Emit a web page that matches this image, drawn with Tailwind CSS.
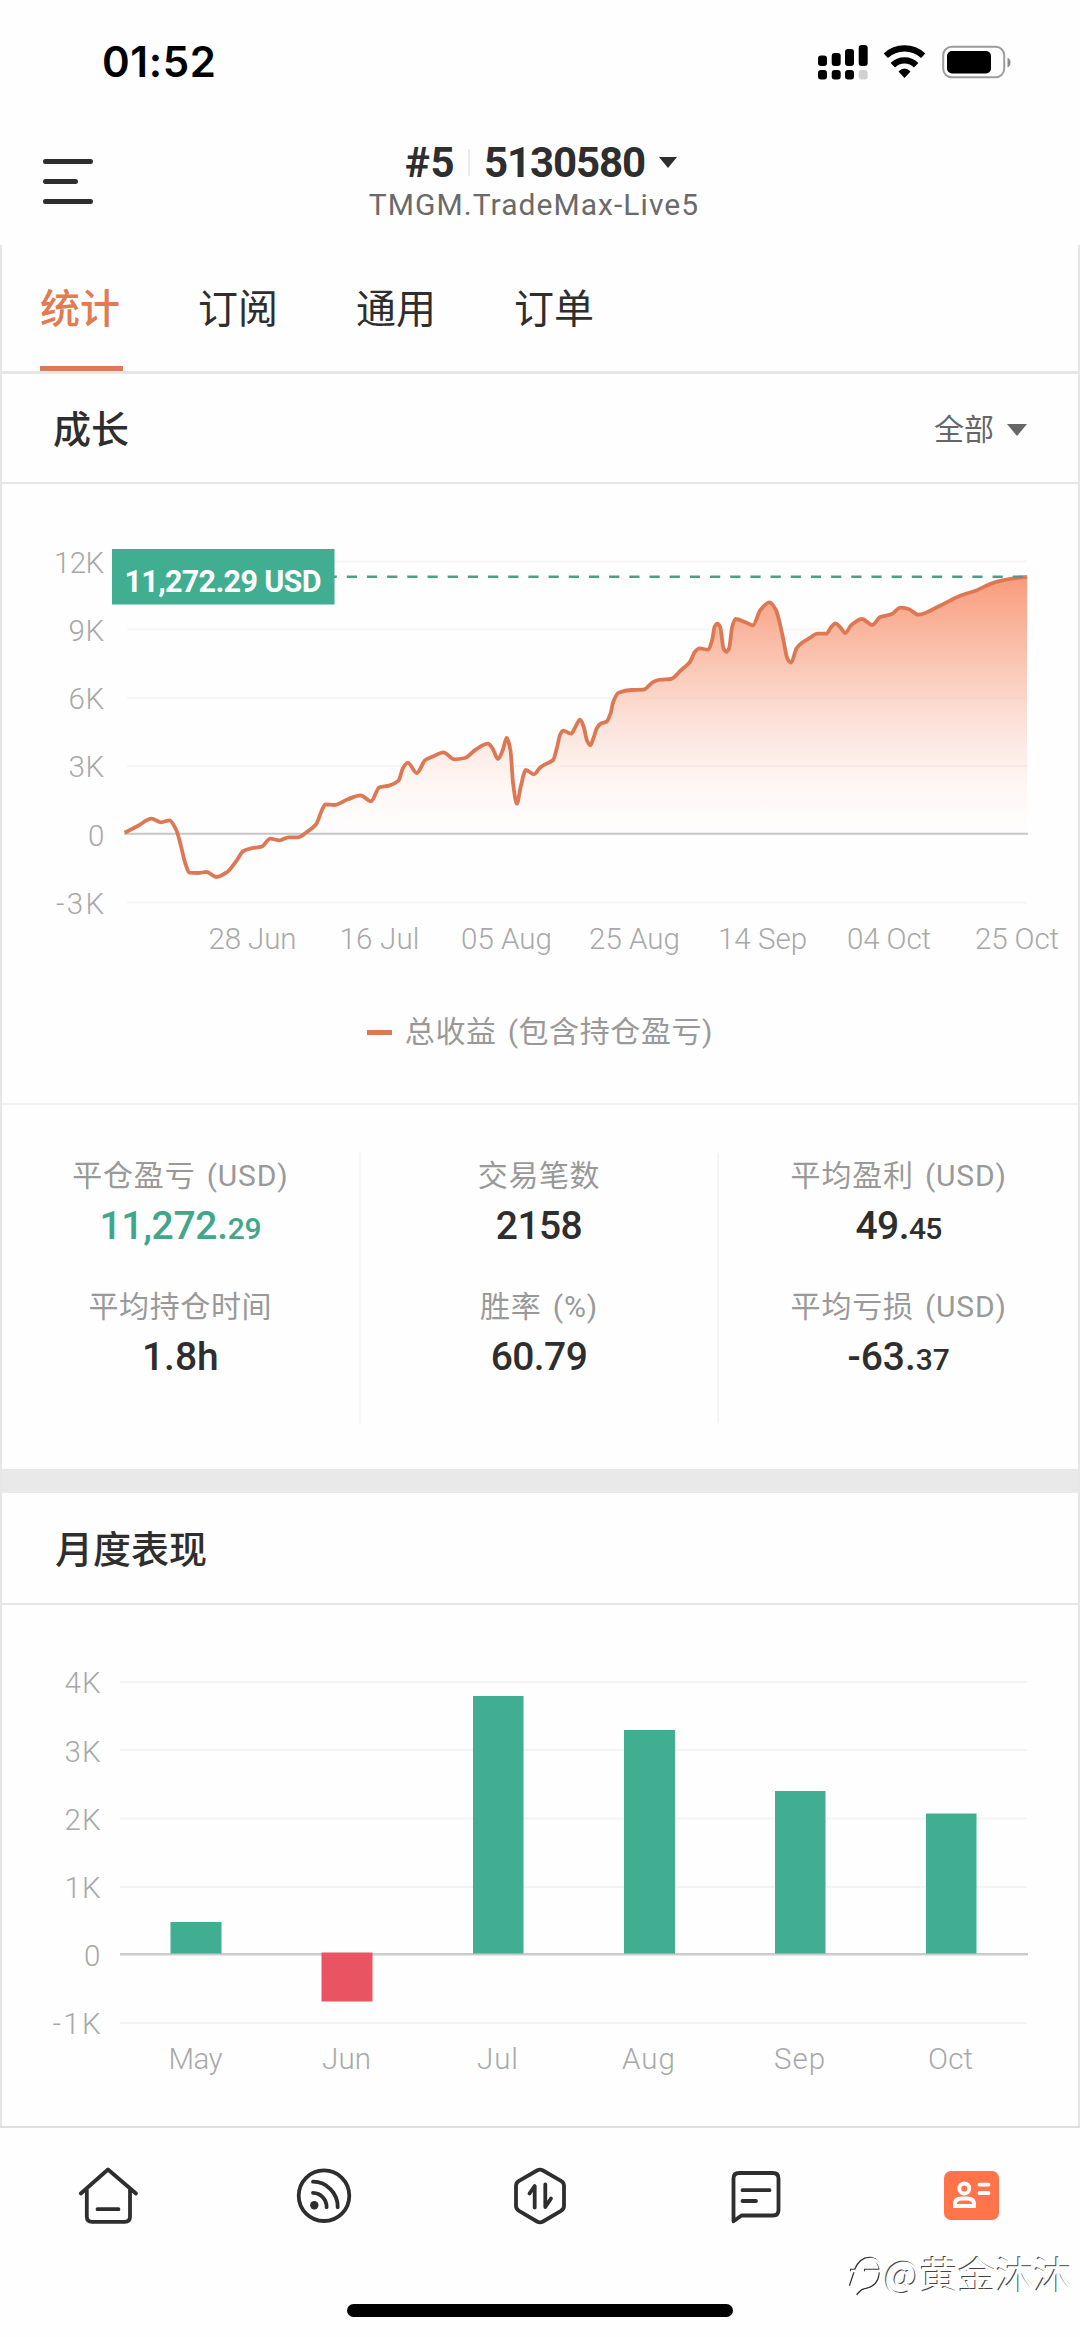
<!DOCTYPE html>
<html lang="zh-CN">
<head>
<meta charset="utf-8">
<title>统计</title>
<script src="https://cdn.jsdelivr.net/npm/@tailwindcss/browser@4"></script>
</head>
<body class="w-[1080px] h-[2337px] overflow-hidden bg-[#fefefe] text-[#2e2e2e] font-['Roboto','Noto_Sans_CJK_SC',sans-serif]">
<div class="relative flex flex-col h-[2337px]">

  <!-- status bar -->
  <header class="flex flex-col h-[245px] shrink-0">
    <div class="flex items-center justify-between h-[123px] pl-[102px] pr-[68px]">
      <span class="font-['Inter',sans-serif] font-semibold text-[42px] leading-none text-black tracking-[0.6px]">01:52</span>
      <svg class="w-[196px] h-[40px]" viewBox="816 41 196 40">
        <rect x="818" y="54.5" width="9" height="10.5" rx="3"/><rect x="831.7" y="52" width="9" height="13" rx="3"/><rect x="845" y="48" width="9" height="17" rx="3"/><rect x="858.7" y="44" width="9" height="21" rx="3"/>
        <rect x="818" y="69" width="9" height="9.5" rx="3"/><rect x="831.7" y="69" width="9" height="9.5" rx="3"/><rect x="845" y="69" width="9" height="9.5" rx="3"/><rect x="858.7" y="69" width="9" height="9.5" rx="3" fill="#d0d0d0"/>
        <path d="M885.8 54.7a27.5 27.5 0 0 1 37.4 0M892.8 64.3a16.5 16.5 0 0 1 23.4 0" fill="none" stroke="#000" stroke-width="6.2"/>
        <path d="M898.5 70.5q6-6 12 0l-6 6.5z"/>
        <rect x="943.2" y="45.7" width="61" height="30.5" rx="8.5" fill="none" stroke="#9c9c9c" stroke-width="2"/>
        <rect x="947" y="50" width="44" height="22.5" rx="5"/>
        <path d="M1007.5 56.5q3 1.5 3 5t-3 5z" fill="#8c8c8c"/>
      </svg>
    </div>
    <div class="flex h-[122px]">
      <svg class="ml-[43px] mt-[35px] w-[50px] h-[46px]" viewBox="0 0 50 46" stroke="#2e2e2e" stroke-width="5" stroke-linecap="round"><path d="M2.5 3.5h45M2.5 23.5h30M2.5 43.5h45"/></svg>
      <div class="flex flex-col items-center ml-[242px] w-[398px] mt-[19px]">
        <div class="flex items-center h-[40px] pl-[14px]">
          <span class="font-bold text-[42px] leading-[40px] pt-[2px] tracking-[0.5px]">#5</span>
          <span class="w-[2px] h-[27px] ml-[13px] mr-[14px] bg-[#ececec]"></span>
          <span class="font-bold text-[42px] leading-[40px] pt-[2px] tracking-[-1.1px]">5130580</span>
          <svg class="ml-[14px] w-[18px] h-[11px]" viewBox="0 0 18 11"><path d="M0 0h18l-9 11z" fill="#2e2e2e"/></svg>
        </div>
        <span class="text-[30px] leading-[34px] mt-[6px] text-[#6a6a6a] tracking-[1.05px]">TMGM.TradeMax-Live5</span>
      </div>
    </div>
  </header>

  <main class="flex flex-col h-[1881px] shrink-0 border-x-2 border-[#e6e6e6]">
    <nav class="flex h-[129px] shrink-0 gap-[75px] pl-[38px] border-b-3 border-[#e6e6e6] text-[40px] leading-[130px]">
      <a class="w-[83px] h-[126px] font-medium text-[#e27a52] border-b-5 border-[#db7a59]">统计</a>
      <a class="w-[83px]">订阅</a><a class="w-[83px]">通用</a><a class="w-[83px]">订单</a>
    </nav>
    <div class="flex items-center justify-between h-[110px] shrink-0 pl-[51px] pr-[51px] pt-[3px] border-b-2 border-[#e6e6e6]">
      <h2 class="font-medium text-[38px] leading-none">成长</h2>
      <div class="flex items-center gap-[13px] text-[30px] leading-none text-[#666]">全部<svg class="w-[20px] h-[12px]" viewBox="0 0 20 12"><path d="M0 0h20l-10 12z" fill="#666"/></svg></div>
    </div>

    <!-- growth curve -->
    <svg class="w-[1076px] h-[521px] shrink-0" viewBox="2 484 1076 521">
      <defs><linearGradient id="area" gradientUnits="userSpaceOnUse" x1="0" y1="576" x2="0" y2="834">
        <stop offset="0" stop-color="#fa9b7c"/><stop offset=".25" stop-color="#f9bba5"/><stop offset=".55" stop-color="#fce0d7"/><stop offset=".8" stop-color="#fef6f3"/><stop offset="1" stop-color="#fefefe"/>
      </linearGradient></defs>
      <path d="M127 561.5h900M127 629.5h900M127 698h900M127 766h900M127 902.5h900" stroke="#f5f5f5" stroke-width="2"/>
      <path id="fill" fill="url(#area)"/>
      <path d="M640 698h387M560 766h467" stroke="#e8b9a5" stroke-opacity=".12" stroke-width="2"/>
      <path d="M124 833.7h904" stroke="#c6c6c6" stroke-width="2"/>
      <path id="curve" fill="none" stroke="#dd7855" stroke-width="3.8" stroke-linejoin="round"/>
      <path d="M326.6 576.7H1027" stroke="#4a9f86" stroke-width="2.6" stroke-dasharray="10.2 9.98"/>
      <rect x="112" y="549" width="222.5" height="55.5" fill="#42ae91"/>
      <text x="124.5" y="592" font-size="30.5" font-weight="700" fill="#fff" textLength="197">11,272.29 USD</text>
      <g font-size="29.5" font-weight="300" fill="#a8a8a8">
        <text x="54" y="573" textLength="50">12K</text><text x="68.5" y="641" textLength="35.5">9K</text><text x="68.5" y="709" textLength="35.5">6K</text><text x="68.5" y="777" textLength="35.5">3K</text><text x="88" y="845.5">0</text><text x="56" y="914" textLength="48">-3K</text>
      </g>
      <g font-size="29.5" font-weight="300" fill="#a8a8a8">
        <text x="208.5" y="948.5" textLength="88">28 Jun</text><text x="339.5" y="948.5" textLength="80">16 Jul</text><text x="461" y="948.5" textLength="91">05 Aug</text><text x="589" y="948.5" textLength="91">25 Aug</text><text x="718" y="948.5" textLength="89">14 Sep</text><text x="847" y="948.5" textLength="84">04 Oct</text><text x="975" y="948.5" textLength="84">25 Oct</text>
      </g>
    </svg>
    <div class="flex items-center justify-center gap-[13px] h-[54px] shrink-0 text-[30px] leading-[54px] text-[#999] tracking-[0.6px]">
      <span class="w-[25px] h-[5px] bg-[#dd7855]"></span><span class="[word-spacing:3px]">总收益 (包含持仓盈亏)</span>
    </div>
    <div class="h-[46px] shrink-0 border-b-2 border-[#f2f2f2]"></div>

    <!-- key figures -->
    <section class="grid grid-cols-3 h-[270px] mt-[48px] mb-[46px] shrink-0 text-center divide-x-2 divide-[#f6f6f6]">
      <div class="flex flex-col">
        <p class="h-[46px] leading-[46px] text-[30px] tracking-[0.8px] [word-spacing:3px] text-[#999]">平仓盈亏 (USD)</p>
        <p class="h-[85px] leading-[54px] text-[39px] tracking-[-0.3px] font-medium text-[#42a68b]">11,272.<span class="text-[30px]">29</span></p>
        <p class="h-[46px] leading-[46px] text-[30px] tracking-[0.6px] text-[#999]">平均持仓时间</p>
        <p class="leading-[54px] text-[39px] font-medium">1.8h</p>
      </div>
      <div class="flex flex-col">
        <p class="h-[46px] leading-[46px] text-[30px] tracking-[0.6px] text-[#999]">交易笔数</p>
        <p class="h-[85px] leading-[54px] text-[39px] tracking-[-0.6px] font-medium">2158</p>
        <p class="h-[46px] leading-[46px] text-[30px] tracking-[0.8px] [word-spacing:3px] text-[#999]">胜率 (%)</p>
        <p class="leading-[54px] text-[39px] tracking-[-0.6px] font-medium">60.79</p>
      </div>
      <div class="flex flex-col">
        <p class="h-[46px] leading-[46px] text-[30px] tracking-[0.8px] [word-spacing:3px] text-[#999]">平均盈利 (USD)</p>
        <p class="h-[85px] leading-[54px] text-[39px] tracking-[-0.6px] font-medium">49.<span class="text-[30px]">45</span></p>
        <p class="h-[46px] leading-[46px] text-[30px] tracking-[0.8px] [word-spacing:3px] text-[#999]">平均亏损 (USD)</p>
        <p class="leading-[54px] text-[39px] font-medium">-63.<span class="text-[30px]">37</span></p>
      </div>
    </section>
    <div class="h-[24px] shrink-0 bg-[#e9e9e9]"></div>
    <div class="flex items-center h-[112px] shrink-0 pl-[53px] pt-[3px] border-b-2 border-[#e6e6e6]"><h2 class="font-medium text-[38px] leading-none">月度表现</h2></div>

    <!-- monthly results -->
    <svg class="w-[1076px] h-[521px] shrink-0" viewBox="2 1605 1076 521">
      <path d="M120 1682h907M120 1750h907M120 1818.5h907M120 1887h907M120 2023h907" stroke="#f3f3f3" stroke-width="2"/>
      <path d="M120 1954.3h908" stroke="#cbcbcb" stroke-width="2.6"/>
      <g fill="#42ae91"><rect x="170.5" y="1922" width="51" height="31.5"/><rect x="473" y="1696" width="50.5" height="257.5"/><rect x="624" y="1730" width="51" height="223.5"/><rect x="775" y="1791" width="50.5" height="162.5"/><rect x="926" y="1813.5" width="50.5" height="140"/></g>
      <rect x="321.5" y="1952.5" width="51" height="49" fill="#e85461"/>
      <g font-size="29.5" font-weight="300" fill="#a8a8a8">
        <text x="64.5" y="1693" textLength="36">4K</text><text x="64.5" y="1761.5" textLength="36">3K</text><text x="64.5" y="1829.5" textLength="36">2K</text><text x="64.5" y="1898" textLength="36">1K</text><text x="84" y="1966">0</text><text x="52.5" y="2034" textLength="48">-1K</text>
      </g>
      <g font-size="29.5" font-weight="300" fill="#a8a8a8">
        <text x="168.5" y="2069" textLength="54">May</text><text x="322" y="2069" textLength="49">Jun</text><text x="477" y="2069" textLength="41">Jul</text><text x="622" y="2069" textLength="53">Aug</text><text x="774" y="2069" textLength="51">Sep</text><text x="928" y="2069" textLength="45">Oct</text>
      </g>
    </svg>
  </main>

  <!-- bottom tabs -->
  <footer class="flex flex-col h-[211px] border-t-2 border-[#dedede]">
    <nav class="grid grid-cols-5 justify-items-center pt-[34px] h-[176px]">
      <svg class="w-[66px] h-[66px]" viewBox="75.5 2162 66 66" fill="none" stroke="#2e2e2e" stroke-width="3.8" stroke-linecap="round" stroke-linejoin="round"><path d="M81.3 2193.5 108.5 2169.5 136.5 2193.5M87.3 2190v26.5q0 5.3 5.3 5.3h32.6q5.3 0 5.3-5.3V2190M98 2209.2h21"/></svg>
      <svg class="w-[66px] h-[66px]" viewBox="291 2162 66 66" fill="none" stroke="#2e2e2e" stroke-width="3.8" stroke-linecap="round"><circle cx="324" cy="2195.7" r="25.3"/><path d="M313 2181.7a25 25 0 0 1 24.7 25.5M313 2192.8a14 14 0 0 1 13.6 14.4"/><circle cx="314.3" cy="2205.3" r="4.2" fill="#2e2e2e" stroke="none"/></svg>
      <svg class="w-[66px] h-[66px]" viewBox="507 2162 66 66" fill="none" stroke="#2e2e2e" stroke-width="3.8" stroke-linecap="round" stroke-linejoin="round"><path d="M537 2170.5q3-1.700 6 0l18 10.3q3 1.700 3 5v20q0 3.400-3 5l-18 10.7q-3 1.700-6 0l-18-10.7q-3-1.700-3-5v-20q0-3.300 3-5zM529.5 2193.5l5.200-7.500v21.5M545.3 2184.5v22.500l5.700-8.500"/></svg>
      <svg class="w-[66px] h-[66px]" viewBox="722.5 2162 66 66" fill="none" stroke="#2e2e2e" stroke-width="3.8" stroke-linecap="round" stroke-linejoin="round"><path d="M733 2221.3V2178.5q0-5.5 5.5-5.5h34q5.500 0 5.500 5.500v31.500q0 5.500-5.500 5.500H741zM742 2190.200h27M742 2201h13.500"/></svg>
      <svg class="w-[66px] h-[66px]" viewBox="939 2162 66 66" fill="none" stroke="#fff" stroke-width="3.8"><rect x="944" y="2171" width="55" height="49" rx="7" fill="#ff7448" stroke="none"/><circle cx="964.3" cy="2188.5" r="5"/><path d="M955 2206v-2q0-5.500 6.500-5.500h6q6.500 0 6.500 5.500v2z"/><path d="M979.5 2184.7h9M979.5 2193h9" stroke-linecap="round"/></svg>
    </nav>
    <div class="w-[386px] h-[13px] ml-[347px] rounded-full bg-black"></div>
  </footer>

  <!-- author mark laid over the bottom bar -->
  <div class="absolute left-[848px] top-[2247px] flex items-center h-[52px] text-white">
    <svg class="w-[36px] h-[48px] [filter:drop-shadow(-1px_-1px_0_#333)]" viewBox="845 2252 36 48" fill="none" stroke="#fff" stroke-width="2.5"><path d="M848 2274h5q5-13 16-12 9 2 9 14-1 14-14 17-4 0-9 6M853 2275l-5 15M862 2274h16"/></svg>
    <span class="text-[38px] leading-[52px] whitespace-nowrap font-['Noto_Sans_CJK_SC',sans-serif] [text-shadow:-1px_-1px_0_#444]">@黄金沐沐</span>
  </div>
</div>

<script>
const pts = [[124.7,832.7],[137.7,826],[151.5,818.7],[161.2,822.3],[169.4,820.3],[176.3,830],[181.1,846.7],[185.3,863.3],[189.4,872.7],[198,873],[206.6,872],[216.3,877],[227.3,872],[235.9,861.7],[243.5,851],[251.4,848.3],[261.7,846.7],[270.3,838.7],[279.6,840.3],[288.6,837.3],[297.9,837.3],[306.5,832.3],[316.1,824.3],[322,810],[325.4,804.3],[334,805],[347.8,799.3],[360.6,795.3],[370.9,801.3],[379.5,787.3],[389.1,785.7],[398.5,780.7],[402.9,768.3],[407.8,762.7],[416.7,773],[425.3,760],[433.9,756],[443.2,752.3],[454.6,759.3],[464.9,758],[475.2,750],[488,743.7],[492.5,748.3],[498,759],[502.8,750],[506.6,738],[510.4,750],[513.1,783.3],[516.9,803.7],[520.7,786.7],[525.9,770],[533.8,774.3],[540,767.7],[545.2,764.3],[553.1,760],[557.2,746.7],[560,735],[563.1,730.7],[571,733.7],[575.5,726.7],[580,719.7],[583.7,726.7],[586.8,740],[590.3,745.3],[593.4,738.3],[596.8,728.3],[601.3,723.3],[606.5,721.7],[610.6,713.3],[613.3,701.7],[618.5,692.7],[631.3,690],[643.3,689.7],[653.6,681.7],[660.5,679.7],[670.9,679],[681.2,670],[689.8,662.3],[695,651.7],[699.4,648.3],[707.7,649.7],[712.2,640],[714.6,626.7],[717.3,623.7],[720.1,626.7],[723.5,648.3],[726.3,651.7],[729.1,648.3],[732.2,626.7],[735.6,619],[744.9,622],[752.8,625.3],[760.4,610],[769.7,602.3],[775.9,610],[782.8,636.7],[787.3,658.3],[791,662.7],[796.6,648.3],[801.7,643],[810.3,637.7],[817.2,633.7],[826.5,633.7],[831,627.3],[835.5,623.3],[840.3,627.3],[845.1,633],[851.7,624.7],[862,619],[872.3,625],[880.2,617],[891.3,614.3],[900.6,607.7],[908.5,609],[918.1,614.7],[939.5,606],[960.1,595.7],[975.6,590.7],[994.6,582.3],[1011.8,578.7],[1027,576.8]];
// monotone cubic: slope is zero at every local extreme, so peaks never overshoot
const n = pts.length, s = [], m = [];
for (let i = 0; i < n - 1; i++) s[i] = (pts[i+1][1] - pts[i][1]) / (pts[i+1][0] - pts[i][0]);
for (let i = 0; i < n; i++) {
  if (i === 0) m[i] = s[0];
  else if (i === n - 1) m[i] = s[n-2];
  else m[i] = s[i-1] * s[i] <= 0 ? 0 : 2 * s[i-1] * s[i] / (s[i-1] + s[i]);
}
let d = `M${pts[0]}`;
for (let i = 0; i < n - 1; i++) {
  const h = (pts[i+1][0] - pts[i][0]) / 3;
  d += `C${pts[i][0]+h},${pts[i][1]+m[i]*h} ${pts[i+1][0]-h},${pts[i+1][1]-m[i+1]*h} ${pts[i+1]}`;
}
document.getElementById('curve').setAttribute('d', d);
// shade only the part above the zero line
const from = d.indexOf('C', d.indexOf('306.5,832.3'));
document.getElementById('fill').setAttribute('d', 'M304,833.7L306.5,832.3' + d.slice(from) + 'V833.7Z');
</script>
</body>
</html>
